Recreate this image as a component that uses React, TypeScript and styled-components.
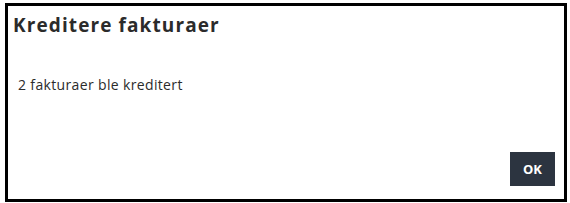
import React from "react";
import styled, { createGlobalStyle } from "styled-components";

const Global = createGlobalStyle`
  html, body { margin: 0; padding: 0; background: #fff; }
  body { font-family: "Open Sans", Lato, sans-serif; }
`;

const Dialog = styled.div`
  box-sizing: border-box;
  margin: 3px 0 0 5px;
  width: 562px;
  height: 199px;
  border: 3px solid #000;
  background: #fff;
  display: flex;
  flex-direction: column;
`;

const Title = styled.h2`
  margin: 0;
  padding: 7px 0 0 5px;
  font-family: "Open Sans", sans-serif;
  font-size: 19px;
  line-height: 24px;
  font-weight: 700;
  letter-spacing: 1.1px;
  color: #2b2b2b;
`;

const Body = styled.p`
  margin: 0;
  padding: 38px 0 0 10px;
  font-family: "Open Sans", sans-serif;
  font-size: 14px;
  line-height: 20px;
  letter-spacing: 0.35px;
  color: #2b2b2b;
  flex: 1;
`;

const Footer = styled.div`
  display: flex;
  justify-content: flex-end;
  padding: 0 9px 13px 0;
`;

const Button = styled.button`
  width: 45px;
  height: 34px;
  border: none;
  background: #2c3440;
  color: #fff;
  font-family: "Open Sans", sans-serif;
  font-weight: 700;
  font-size: 13px;
  padding: 0;
  cursor: pointer;
`;

export default function App() {
  return (
    <>
      <Global />
      <Dialog>
        <Title>Kreditere fakturaer</Title>
        <Body>2 fakturaer ble kreditert</Body>
        <Footer>
          <Button>OK</Button>
        </Footer>
      </Dialog>
    </>
  );
}
